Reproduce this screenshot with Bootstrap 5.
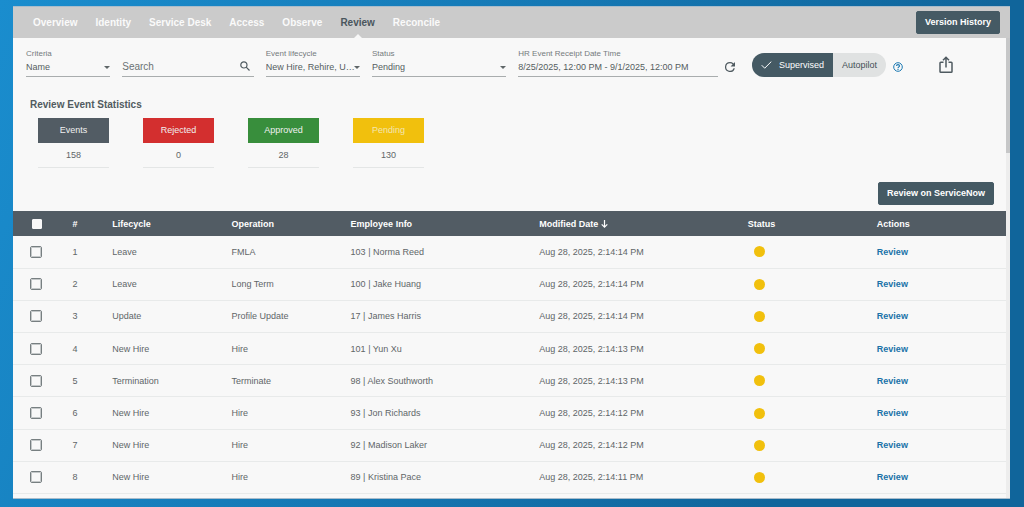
<!DOCTYPE html>
<html lang="en">
<head>
<meta charset="utf-8">
<meta name="viewport" content="width=device-width, initial-scale=1">
<title>Review</title>
<link rel="stylesheet" href="https://cdn.jsdelivr.net/npm/bootstrap@5.3.0/dist/css/bootstrap.min.css">
<script src="https://cdn.jsdelivr.net/npm/bootstrap@5.3.0/dist/js/bootstrap.bundle.min.js"></script>
<style>
  body { font-family: "Liberation Sans", Arial, sans-serif; font-size: 9px; line-height: 12px; color: #5f6668;
    background: linear-gradient(115deg, #1a8dce 0%, #1578b4 45%, #10659b 80%); padding: 6px 14px 8px 13px; min-height: 100vh; }
  .app-window { background: #f8f8f8; border: 1px solid #a9bccb; border-width: 1px 0; }
  .top-tabs { background: #cbcbcb; height: 31px; --bs-navbar-padding-y: 0; padding: 0 10px 0 20px; }
  .top-tabs .nav { gap: 18px; }
  .top-tabs .nav-link { padding: 0; font-size: 10px; line-height: 31px; font-weight: bold; color: #fafafa; }
  .top-tabs .nav-link.active { color: #4a565d; position: relative; }
  .top-tabs .nav-link.active::after { content: ""; position: absolute; bottom: 0; left: 50%; margin-left: -4px;
    border: 4px solid transparent; border-top: 0; border-bottom-color: #f8f8f8; }
  .btn-slate { --bs-btn-color: #fff; --bs-btn-bg: #455a64; --bs-btn-hover-bg: #384a53; --bs-btn-hover-color: #fff;
    --bs-btn-padding-y: 5px; --bs-btn-padding-x: 8px; --bs-btn-font-size: 9px; --bs-btn-border-radius: 2px;
    --bs-btn-border-color: #455a64; --bs-btn-line-height: 11px; --bs-btn-font-weight: bold; }
  .filters { padding: 10px 53px 0 13px; }
  .fields { display: grid; grid-template-columns: 84fr 131fr 94fr 134fr 199fr; column-gap: 12px; align-items: end; }
  .fields label { display: block; font-size: 8px; line-height: 11px; color: #757b7d; white-space: nowrap; }
  .field-box { display: flex; align-items: center; border-bottom: 1px solid #a9adae; height: 18px; }
  .field-box input, .field-box select { width: 100%; min-width: 0; border: 0; background: none; padding: 0 0 1px; color: #555d60; appearance: none; outline: 0; text-overflow: ellipsis; line-height: 12px; }
  .field-box select { background: url("data:image/svg+xml,%3Csvg xmlns='http://www.w3.org/2000/svg' width='6' height='3'%3E%3Cpath d='M0 0h6L3 3z' fill='%235f6668'/%3E%3C/svg%3E") no-repeat right center; }
  .field-box input[type="search"] { font-size: 10px; }
  .field-box input::placeholder { color: #6b7274; opacity: 1; }
  .plain-btn { border: 0; background: none; padding: 0; display: flex; color: #4f5a60; }
  .refresh-btn { margin: 4px 17px 0 7px; }
  .help-btn { margin: 3px 36px 0 7px; color: #1b78b2; }
  .mode-switch { height: 24px; border-radius: 12px; overflow: hidden; background: #e0e2e2; }
  .mode-switch label { display: flex; align-items: center; padding: 0 9px; color: #455056; }
  .mode-switch .btn-check:checked + label { background: #455a64; color: #fff; gap: 7px; }
  .stats-block { padding-top: 22px; }
  .stats { padding: 7px 0 0 25px; gap: 34px; }
  .stats-title { font-size: 10px; line-height: 12px; font-weight: bold; margin: 0; padding: 0 17px; color: #515b60; }
  .stat-box { width: 71px; text-align: center; border-bottom: 1px solid #e4e6e6; }
  .stat-box dt { font-weight: normal; line-height: 25px; color: #f0f0f0; }
  .stat-box dd { margin: 0; line-height: 24px; }
  .bg-slate { background: #525c64; } .bg-red { background: #d32f2f; } .bg-green { background: #388e3c; } .bg-amber { background: #f1c00d; }
  .bg-amber.stat-name { color: #f3e6b0; }
  .table-tools { padding: 14px 12px 6px; }
  .event-table { width: 100%; table-layout: fixed; }
  .event-table th { background: #525c64; color: #fff; height: 25px; padding: 0; }
  .event-table td { border-bottom: 1px solid #e8eaea; padding: 0; height: 32px; }
  .event-table .pick { padding-left: 17px; line-height: 0; }
  .event-table input { appearance: none; width: 12px; height: 12px; margin: 0; border: 1px solid #777f81; outline: 1px solid #c4c8c9; outline-offset: -2px; border-radius: 2px; background: #f8f8f8; }
  .event-table th input { width: 10px; height: 10px; border-color: #f8f8f8; outline: 0; margin-left: 2px; border-radius: 1px; }
  .event-table a { color: #1a73a8; text-decoration: none; font-weight: bold; }
  .dot { display: block; width: 11px; height: 11px; border-radius: 50%; background: #f1c00d; margin-left: 6px; }
  .rail { width: 4px; background: #ededed; }
  .rail-thumb { height: 25%; background: #c6c7c8; }
</style>
</head>
<body class="d-flex flex-column">
<div class="app-window d-flex flex-column flex-grow-1">
  <nav class="top-tabs navbar flex-nowrap justify-content-between" aria-label="Main">
    <div class="nav flex-nowrap">
      <a class="nav-link" href="#">Overview</a>
      <a class="nav-link" href="#">Identity</a>
      <a class="nav-link" href="#">Service Desk</a>
      <a class="nav-link" href="#">Access</a>
      <a class="nav-link" href="#">Observe</a>
      <a class="nav-link active" href="#" aria-current="page">Review</a>
      <a class="nav-link" href="#">Reconcile</a>
    </div>
    <button type="button" class="btn btn-slate text-nowrap">Version History</button>
  </nav>

  <div class="d-flex flex-grow-1">
    <main class="d-flex flex-column flex-grow-1">
      <form class="filters d-flex align-items-end">
        <div class="fields flex-grow-1">
          <div>
            <label for="criteria">Criteria</label>
            <div class="field-box"><select id="criteria"><option>Name</option></select></div>
          </div>
          <div class="field-box">
            <input id="search" type="search" placeholder="Search" aria-label="Search">
            <button type="button" class="plain-btn me-1 pb-1" aria-label="Run search">
              <svg width="10" height="10" viewBox="0 0 10 10" fill="none" stroke="currentColor" stroke-width="1.2"><circle cx="3.9" cy="3.9" r="3.1"/><path d="M6.2 6.2 9.5 9.5"/></svg>
            </button>
          </div>
          <div>
            <label for="lifecycle">Event lifecycle</label>
            <div class="field-box"><select id="lifecycle"><option>New Hire, Rehire, U…</option></select></div>
          </div>
          <div>
            <label for="status">Status</label>
            <div class="field-box"><select id="status"><option>Pending</option></select></div>
          </div>
          <div>
            <label for="receipt">HR Event Receipt Date Time</label>
            <div class="field-box"><input id="receipt" type="text" value="8/25/2025, 12:00 PM - 9/1/2025, 12:00 PM"></div>
          </div>
        </div>
        <div class="d-flex align-items-center flex-shrink-0">
          <button type="button" class="plain-btn refresh-btn" aria-label="Refresh">
            <svg width="10" height="10" viewBox="4 4 16 16" fill="currentColor"><path d="M17.65 6.35A7.96 7.96 0 0 0 12 4a8 8 0 1 0 7.73 10h-2.08A6 6 0 1 1 12 6c1.66 0 3.14.69 4.22 1.78L13 11h7V4z"/></svg>
          </button>
          <div class="mode-switch d-flex" role="group" aria-label="Mode">
            <input type="radio" class="btn-check" name="mode" id="supervised" checked>
            <label for="supervised"><svg width="11" height="8" viewBox="0 0 11 8" fill="none" stroke="currentColor"><path d="M.7 4.2 3.7 7.2 10.3.6"/></svg>Supervised</label>
            <input type="radio" class="btn-check" name="mode" id="autopilot">
            <label for="autopilot">Autopilot</label>
          </div>
          <button type="button" class="plain-btn help-btn" aria-label="Help">
            <svg width="10" height="10" viewBox="0 0 10 10" fill="none" stroke="currentColor"><circle cx="5" cy="5" r="4.3"/><path d="M3.5 4.1C3.5 3.1 4.1 2.6 5 2.6S6.5 3.2 6.5 4C6.5 4.9 5 5 5 6.2M5 6.9V7.9" stroke-width="1.1"/></svg>
          </button>
          <button type="button" class="plain-btn" aria-label="Export">
            <svg width="14" height="18" viewBox="0 0 14 18" fill="none" stroke="currentColor" stroke-width="1.5"><path d="M4.5 6.2H1.8Q1 6.2 1 7V15.4Q1 16.2 1.8 16.2H12.2Q13 16.2 13 15.4V7Q13 6.2 12.2 6.2H9.5M7 11.5V1.5M4 4.2 7 1.2 10 4.2"/></svg>
          </button>
        </div>
      </form>

      <section class="stats-block">
        <h2 class="stats-title">Review Event Statistics</h2>
        <dl class="stats d-flex mb-0">
          <div class="stat-box"><dt class="bg-slate">Events</dt><dd>158</dd></div>
          <div class="stat-box"><dt class="bg-red">Rejected</dt><dd>0</dd></div>
          <div class="stat-box"><dt class="bg-green">Approved</dt><dd>28</dd></div>
          <div class="stat-box"><dt class="bg-amber stat-name">Pending</dt><dd>130</dd></div>
        </dl>
      </section>

      <div class="table-tools d-flex justify-content-end">
        <button type="button" class="btn btn-slate">Review on ServiceNow</button>
      </div>

      <div class="d-flex flex-grow-1 pb-1">
        <table class="event-table">
          <colgroup><col style="width:6%"><col style="width:4%"><col style="width:12%"><col style="width:12%"><col style="width:19%"><col style="width:21%"><col style="width:13%"><col style="width:13%"></colgroup>
          <thead>
            <tr>
              <th class="pick"><input type="checkbox" aria-label="Select all"></th>
              <th>#</th><th>Lifecycle</th><th>Operation</th><th>Employee Info</th>
              <th>Modified Date <svg width="7" height="8" viewBox="0 0 7 8" fill="none" stroke="currentColor" stroke-width="1.2"><path d="M3.5 0V7M.7 4.3 3.5 7.1 6.3 4.3"/></svg></th>
              <th>Status</th><th>Actions</th>
            </tr>
          </thead>
          <tbody>
            <tr><td class="pick"><input type="checkbox" aria-label="Select 1"></td><td>1</td><td>Leave</td><td>FMLA</td><td>103 | Norma Reed</td><td>Aug 28, 2025, 2:14:14 PM</td><td><span class="dot"></span></td><td><a href="#">Review</a></td></tr>
            <tr><td class="pick"><input type="checkbox" aria-label="Select 2"></td><td>2</td><td>Leave</td><td>Long Term</td><td>100 | Jake Huang</td><td>Aug 28, 2025, 2:14:14 PM</td><td><span class="dot"></span></td><td><a href="#">Review</a></td></tr>
            <tr><td class="pick"><input type="checkbox" aria-label="Select 3"></td><td>3</td><td>Update</td><td>Profile Update</td><td>17 | James Harris</td><td>Aug 28, 2025, 2:14:14 PM</td><td><span class="dot"></span></td><td><a href="#">Review</a></td></tr>
            <tr><td class="pick"><input type="checkbox" aria-label="Select 4"></td><td>4</td><td>New Hire</td><td>Hire</td><td>101 | Yun Xu</td><td>Aug 28, 2025, 2:14:13 PM</td><td><span class="dot"></span></td><td><a href="#">Review</a></td></tr>
            <tr><td class="pick"><input type="checkbox" aria-label="Select 5"></td><td>5</td><td>Termination</td><td>Terminate</td><td>98 | Alex Southworth</td><td>Aug 28, 2025, 2:14:13 PM</td><td><span class="dot"></span></td><td><a href="#">Review</a></td></tr>
            <tr><td class="pick"><input type="checkbox" aria-label="Select 6"></td><td>6</td><td>New Hire</td><td>Hire</td><td>93 | Jon Richards</td><td>Aug 28, 2025, 2:14:12 PM</td><td><span class="dot"></span></td><td><a href="#">Review</a></td></tr>
            <tr><td class="pick"><input type="checkbox" aria-label="Select 7"></td><td>7</td><td>New Hire</td><td>Hire</td><td>92 | Madison Laker</td><td>Aug 28, 2025, 2:14:12 PM</td><td><span class="dot"></span></td><td><a href="#">Review</a></td></tr>
            <tr><td class="pick"><input type="checkbox" aria-label="Select 8"></td><td>8</td><td>New Hire</td><td>Hire</td><td>89 | Kristina Pace</td><td>Aug 28, 2025, 2:14:11 PM</td><td><span class="dot"></span></td><td><a href="#">Review</a></td></tr>
          </tbody>
        </table>
      </div>
    </main>
    <div class="rail flex-shrink-0" aria-hidden="true"><div class="rail-thumb"></div></div>
  </div>
</div>
</body>
</html>
